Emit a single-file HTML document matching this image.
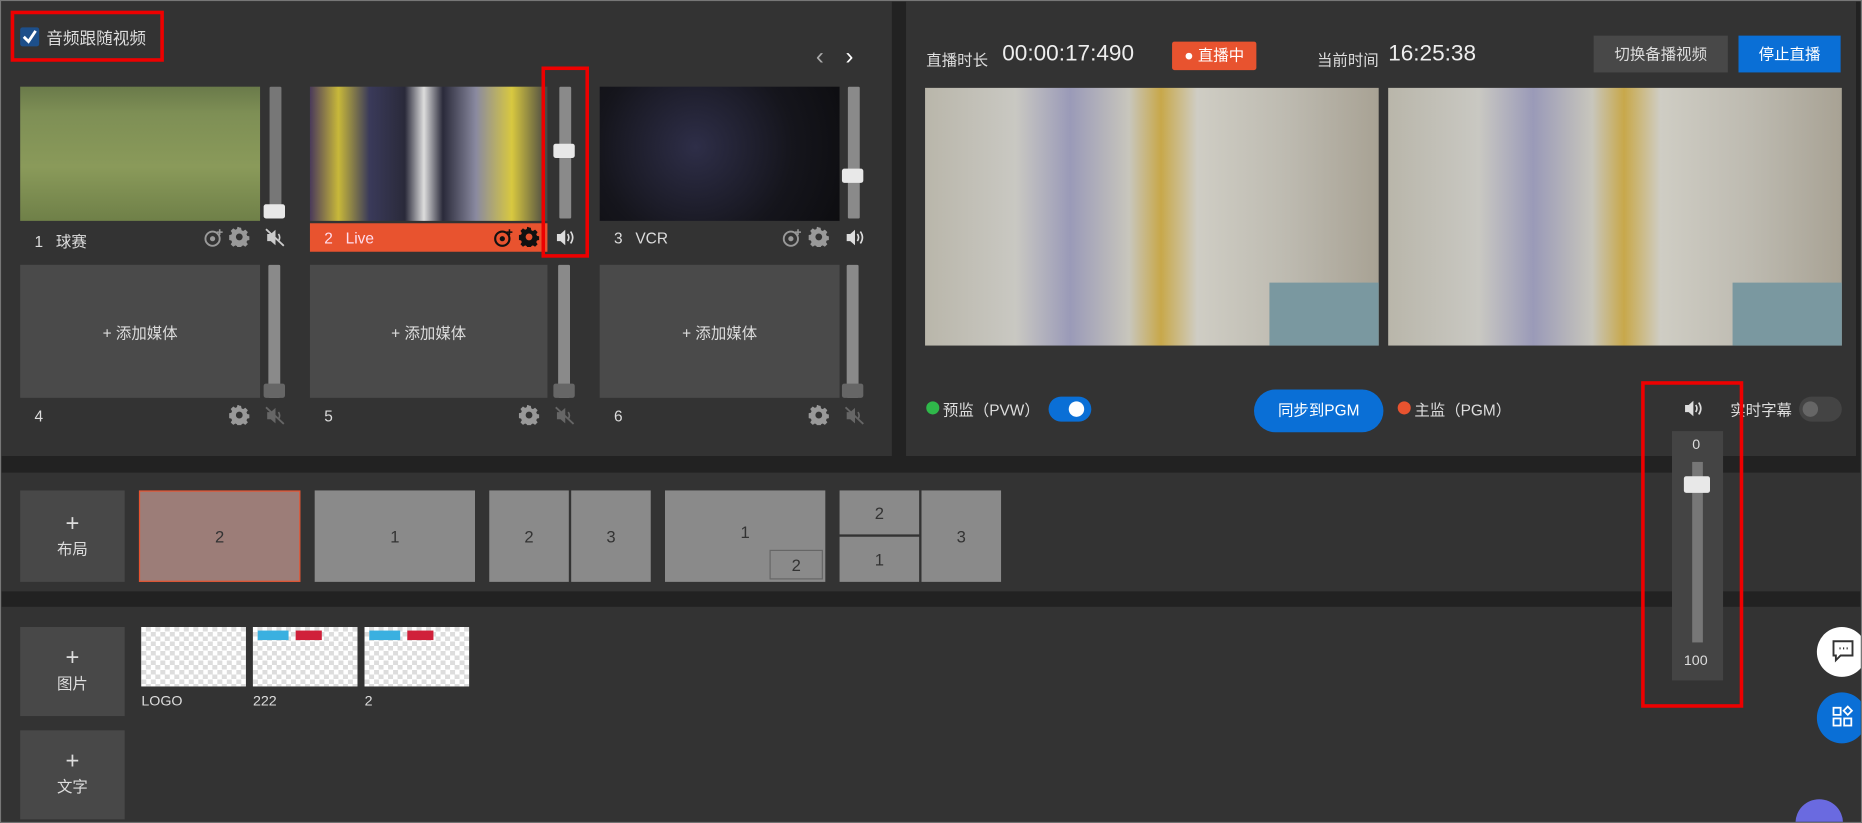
<!DOCTYPE html>
<html><head><meta charset="utf-8">
<style>
*{box-sizing:border-box;margin:0;padding:0}
html,body{width:1862px;height:823px;overflow:hidden;background:#2a2a2a}
#w{position:absolute;left:0;top:0;width:1568px;height:693px;overflow:hidden;transform:scale(1.1875);transform-origin:0 0;background:#222;font-family:"Liberation Sans","Noto Sans CJK SC",sans-serif;color:#ddd;border:1px solid #777}
.a{position:absolute}
.p{position:absolute;background:#333}
.tile{position:absolute;background:#4a4a4a;color:#ddd;font-size:13px;display:flex;align-items:center;justify-content:center}
.trk{position:absolute;width:10px;background:#8a8a8a;border-radius:1px}
.hd{position:absolute;width:18px;height:12px;background:#e8e8e8;border-radius:2px}
.hdd{position:absolute;width:18px;height:12px;background:#666;border-radius:2px}
.lbl{position:absolute;font-size:13px;color:#ddd}
.red{position:absolute;border:3px solid #e00;}
.lay{position:absolute;background:#8a8a8a;color:#333;font-size:14px;display:flex;align-items:center;justify-content:center}
.btn{position:absolute;background:#484848;color:#ddd;font-size:13px;text-align:center}
.chk{position:absolute;background-color:#fff;background-image:repeating-conic-gradient(#ddd 0 25%,#fff 0 50%);background-size:8px 8px}
svg{position:absolute}
</style></head><body><div id="w">
<div class="p" style="left:0;top:0;width:750px;height:383px"></div>
<div class="p" style="left:762px;top:0;width:800px;height:383px"></div>
<div class="p" style="left:0;top:397px;width:1568px;height:100px"></div>
<div class="p" style="left:0;top:510px;width:1568px;height:183px"></div>

<div class="a" style="left:16px;top:22px;width:16px;height:16px;background:#1d4f8a;border-radius:2px"></div>
<svg style="left:16px;top:22px" width="16" height="16"><path d="M3 8 L7 12 L13 3" stroke="#fff" stroke-width="2.4" fill="none"/></svg>
<div class="lbl" style="left:38px;top:21px;font-size:14px">音频跟随视频</div>
<div class="red" style="left:8px;top:8px;width:129px;height:43px"></div>
<div class="lbl" style="left:686px;top:36px;font-size:20px;color:#aaa">‹</div>
<div class="lbl" style="left:711px;top:36px;font-size:20px;color:#fff">›</div>

<div class="a" style="left:16px;top:72px;width:202px;height:113px;background:linear-gradient(180deg,#6a7a4a 0%,#7e8f55 20%,#8a9a5a 60%,#6f8048 100%)"></div>
<div class="a" style="left:260px;top:72px;width:200px;height:113px;background:linear-gradient(90deg,#4a3a5a 0%,#c8b83a 12%,#3a3a5a 25%,#2a2a3a 40%,#ddd 48%,#2a2a3a 56%,#8a8aa0 70%,#d8c840 85%,#444 100%)"></div>
<div class="a" style="left:504px;top:72px;width:202px;height:113px;background:radial-gradient(circle at 40% 45%,#2e2e48 0%,#15151c 60%,#0d0d10 100%)"></div>
<div class="trk" style="left:226px;top:72px;height:111px;background:#777"></div>
<div class="hd" style="left:221px;top:171px"></div>
<div class="trk" style="left:470px;top:72px;height:111px"></div>
<div class="hd" style="left:465px;top:120px"></div>
<div class="trk" style="left:713px;top:72px;height:111px"></div>
<div class="hd" style="left:708px;top:141px"></div>

<div class="a" style="left:260px;top:187px;width:200px;height:24px;background:#e8532f"></div>
<div class="lbl" style="left:28px;top:192px">1&nbsp;&nbsp;&nbsp;球赛</div>
<div class="lbl" style="left:272px;top:192px;color:#fde">2&nbsp;&nbsp;&nbsp;Live</div>
<div class="lbl" style="left:516px;top:192px">3&nbsp;&nbsp;&nbsp;VCR</div>

<svg style="left:170px;top:190px" width="18" height="18"><circle cx="8" cy="10" r="6" stroke="#999" stroke-width="1.6" fill="none"/><circle cx="8" cy="10" r="2.2" fill="#999"/><path d="M14 2v5M11.5 4.5h5" stroke="#999" stroke-width="1.3"/></svg>
<svg style="left:414px;top:190px" width="18" height="18"><circle cx="8" cy="10" r="6" stroke="#111" stroke-width="1.8" fill="none"/><circle cx="8" cy="10" r="2.2" fill="#111"/><path d="M14 2v5M11.5 4.5h5" stroke="#111" stroke-width="1.3"/></svg>
<svg style="left:657px;top:190px" width="18" height="18"><circle cx="8" cy="10" r="6" stroke="#999" stroke-width="1.6" fill="none"/><circle cx="8" cy="10" r="2.2" fill="#999"/><path d="M14 2v5M11.5 4.5h5" stroke="#999" stroke-width="1.3"/></svg>
<svg style="left:192px;top:190px" width="17" height="17" viewBox="0 0 16 16"><path d="M8 0.5l1.4 .2.4 2 1.3.6 1.7-1.1 2 2-1.1 1.7.6 1.3 2 .4v2.8l-2 .4-.6 1.3 1.1 1.7-2 2-1.7-1.1-1.3.6-.4 2H6.6l-.4-2-1.3-.6-1.7 1.1-2-2 1.1-1.7-.6-1.3-2-.4V6.6l2-.4.6-1.3L1.2 3.2l2-2 1.7 1.1 1.3-.6.4-2zM8 5.3a2.7 2.7 0 1 0 0 5.4 2.7 2.7 0 0 0 0-5.4z" fill="#999"/></svg>
<svg style="left:436px;top:190px" width="17" height="17" viewBox="0 0 16 16"><path d="M8 0.5l1.4 .2.4 2 1.3.6 1.7-1.1 2 2-1.1 1.7.6 1.3 2 .4v2.8l-2 .4-.6 1.3 1.1 1.7-2 2-1.7-1.1-1.3.6-.4 2H6.6l-.4-2-1.3-.6-1.7 1.1-2-2 1.1-1.7-.6-1.3-2-.4V6.6l2-.4.6-1.3L1.2 3.2l2-2 1.7 1.1 1.3-.6.4-2zM8 5.3a2.7 2.7 0 1 0 0 5.4 2.7 2.7 0 0 0 0-5.4z" fill="#111"/></svg>
<svg style="left:680px;top:190px" width="17" height="17" viewBox="0 0 16 16"><path d="M8 0.5l1.4 .2.4 2 1.3.6 1.7-1.1 2 2-1.1 1.7.6 1.3 2 .4v2.8l-2 .4-.6 1.3 1.1 1.7-2 2-1.7-1.1-1.3.6-.4 2H6.6l-.4-2-1.3-.6-1.7 1.1-2-2 1.1-1.7-.6-1.3-2-.4V6.6l2-.4.6-1.3L1.2 3.2l2-2 1.7 1.1 1.3-.6.4-2zM8 5.3a2.7 2.7 0 1 0 0 5.4 2.7 2.7 0 0 0 0-5.4z" fill="#999"/></svg>
<svg style="left:192px;top:340px" width="17" height="17" viewBox="0 0 16 16"><path d="M8 0.5l1.4 .2.4 2 1.3.6 1.7-1.1 2 2-1.1 1.7.6 1.3 2 .4v2.8l-2 .4-.6 1.3 1.1 1.7-2 2-1.7-1.1-1.3.6-.4 2H6.6l-.4-2-1.3-.6-1.7 1.1-2-2 1.1-1.7-.6-1.3-2-.4V6.6l2-.4.6-1.3L1.2 3.2l2-2 1.7 1.1 1.3-.6.4-2zM8 5.3a2.7 2.7 0 1 0 0 5.4 2.7 2.7 0 0 0 0-5.4z" fill="#999"/></svg>
<svg style="left:436px;top:340px" width="17" height="17" viewBox="0 0 16 16"><path d="M8 0.5l1.4 .2.4 2 1.3.6 1.7-1.1 2 2-1.1 1.7.6 1.3 2 .4v2.8l-2 .4-.6 1.3 1.1 1.7-2 2-1.7-1.1-1.3.6-.4 2H6.6l-.4-2-1.3-.6-1.7 1.1-2-2 1.1-1.7-.6-1.3-2-.4V6.6l2-.4.6-1.3L1.2 3.2l2-2 1.7 1.1 1.3-.6.4-2zM8 5.3a2.7 2.7 0 1 0 0 5.4 2.7 2.7 0 0 0 0-5.4z" fill="#999"/></svg>
<svg style="left:680px;top:340px" width="17" height="17" viewBox="0 0 16 16"><path d="M8 0.5l1.4 .2.4 2 1.3.6 1.7-1.1 2 2-1.1 1.7.6 1.3 2 .4v2.8l-2 .4-.6 1.3 1.1 1.7-2 2-1.7-1.1-1.3.6-.4 2H6.6l-.4-2-1.3-.6-1.7 1.1-2-2 1.1-1.7-.6-1.3-2-.4V6.6l2-.4.6-1.3L1.2 3.2l2-2 1.7 1.1 1.3-.6.4-2zM8 5.3a2.7 2.7 0 1 0 0 5.4 2.7 2.7 0 0 0 0-5.4z" fill="#999"/></svg>
<svg style="left:222px;top:191px" width="17" height="16"><path d="M2 5h3l4-3.5v13L5 11H2z" fill="#ccc"/><path d="M1 1l15 14" stroke="#ccc" stroke-width="1.5"/><path d="M11.5 5q2 3 0 6" stroke="#ccc" stroke-width="1.4" fill="none"/></svg>
<svg style="left:466px;top:191px" width="17" height="16"><path d="M2 5h3l4-3.5v13L5 11H2z" fill="#ddd"/><path d="M11 5q2 3 0 6M13.5 3q3.5 5 0 10" stroke="#ddd" stroke-width="1.4" fill="none"/></svg>
<svg style="left:710px;top:191px" width="17" height="16"><path d="M2 5h3l4-3.5v13L5 11H2z" fill="#ddd"/><path d="M11 5q2 3 0 6M13.5 3q3.5 5 0 10" stroke="#ddd" stroke-width="1.4" fill="none"/></svg>
<svg style="left:222px;top:341px" width="17" height="16"><path d="M2 5h3l4-3.5v13L5 11H2z" fill="#666"/><path d="M1 1l15 14" stroke="#666" stroke-width="1.5"/><path d="M11.5 5q2 3 0 6" stroke="#666" stroke-width="1.4" fill="none"/></svg>
<svg style="left:466px;top:341px" width="17" height="16"><path d="M2 5h3l4-3.5v13L5 11H2z" fill="#666"/><path d="M1 1l15 14" stroke="#666" stroke-width="1.5"/><path d="M11.5 5q2 3 0 6" stroke="#666" stroke-width="1.4" fill="none"/></svg>
<svg style="left:710px;top:341px" width="17" height="16"><path d="M2 5h3l4-3.5v13L5 11H2z" fill="#666"/><path d="M1 1l15 14" stroke="#666" stroke-width="1.5"/><path d="M11.5 5q2 3 0 6" stroke="#666" stroke-width="1.4" fill="none"/></svg>
<div class="red" style="left:455px;top:55px;width:40px;height:161px"></div>

<div class="tile" style="left:16px;top:222px;width:202px;height:112px">+ 添加媒体</div>
<div class="tile" style="left:260px;top:222px;width:200px;height:112px">+ 添加媒体</div>
<div class="tile" style="left:504px;top:222px;width:202px;height:112px">+ 添加媒体</div>
<div class="trk" style="left:225px;top:222px;height:112px"></div><div class="hdd" style="left:221px;top:322px"></div>
<div class="trk" style="left:469px;top:222px;height:112px"></div><div class="hdd" style="left:465px;top:322px"></div>
<div class="trk" style="left:712px;top:222px;height:112px"></div><div class="hdd" style="left:708px;top:322px"></div>
<div class="lbl" style="left:28px;top:342px">4</div>
<div class="lbl" style="left:272px;top:342px">5</div>
<div class="lbl" style="left:516px;top:342px">6</div>

<div class="lbl" style="left:779px;top:39px">直播时长</div>
<div class="lbl" style="left:843px;top:34px;font-size:19px;color:#eee">00:00:17:490</div>
<div class="a" style="left:986px;top:34px;width:71px;height:24px;background:#e8532f;border-radius:2px;color:#fff;font-size:13px;line-height:24px;text-align:center">● 直播中</div>
<div class="lbl" style="left:1108px;top:39px">当前时间</div>
<div class="lbl" style="left:1168px;top:34px;font-size:19px;color:#eee">16:25:38</div>
<div class="btn" style="left:1341px;top:29px;width:113px;height:31px;line-height:31px">切换备播视频</div>
<div class="btn" style="left:1463px;top:29px;width:86px;height:31px;line-height:31px;background:#0a6fd6;color:#fff">停止直播</div>

<div class="a" style="left:778px;top:73px;width:382px;height:217px;background:linear-gradient(90deg,#b9b6aa 0%,#c9c8c2 20%,#9a9ab8 32%,#c8c6bc 45%,#c8a84a 52%,#cfcdc4 60%,#bdbab0 80%,#a8a294 100%)"></div>
<div class="a" style="left:1068px;top:237px;width:92px;height:53px;background:#7a98a0"></div>
<div class="a" style="left:1168px;top:73px;width:382px;height:217px;background:linear-gradient(90deg,#b9b6aa 0%,#c9c8c2 20%,#9a9ab8 32%,#c8c6bc 45%,#c8a84a 52%,#cfcdc4 60%,#bdbab0 80%,#a8a294 100%)"></div>
<div class="a" style="left:1458px;top:237px;width:92px;height:53px;background:#7a98a0"></div>

<div class="a" style="left:779px;top:337px;width:11px;height:11px;border-radius:50%;background:#2fb84a"></div>
<div class="lbl" style="left:793px;top:334px">预监（PVW）</div>
<div class="a" style="left:882px;top:333px;width:36px;height:21px;border-radius:11px;background:#0a6fd6"></div>
<div class="a" style="left:899px;top:337px;width:13px;height:13px;border-radius:50%;background:#fff"></div>
<div class="a" style="left:1055px;top:327px;width:109px;height:36px;border-radius:18px;background:#0a6fd6;color:#fff;font-size:13px;line-height:36px;text-align:center">同步到PGM</div>
<div class="a" style="left:1176px;top:337px;width:11px;height:11px;border-radius:50%;background:#e8532f"></div>
<div class="lbl" style="left:1190px;top:334px">主监（PGM）</div>
<svg style="left:1416px;top:335px" width="18" height="16"><path d="M2 5h3l4-3.5v13L5 11H2z" fill="#ddd"/><path d="M11 5q2 3 0 6M13.5 3q3.5 5 0 10" stroke="#ddd" stroke-width="1.4" fill="none"/></svg>
<div class="lbl" style="left:1456px;top:334px">实时字幕</div>
<div class="a" style="left:1514px;top:333px;width:36px;height:21px;border-radius:11px;background:#444"></div>
<div class="a" style="left:1517px;top:337px;width:13px;height:13px;border-radius:50%;background:#666"></div>

<div class="btn" style="left:16px;top:412px;width:88px;height:77px;padding-top:18px;line-height:20px"><span style="font-size:20px">+</span><br>布局</div>
<div class="lay" style="left:116px;top:412px;width:136px;height:77px;background:#9c7d78;border:1px solid #e8532f">2</div>
<div class="lay" style="left:264px;top:412px;width:135px;height:77px">1</div>
<div class="lay" style="left:411px;top:412px;width:67px;height:77px">2</div>
<div class="lay" style="left:480px;top:412px;width:67px;height:77px">3</div>
<div class="lay" style="left:559px;top:412px;width:135px;height:77px;padding-bottom:8px">1</div>
<div class="lay" style="left:647px;top:462px;width:45px;height:25px;border:1px solid #666">2</div>
<div class="lay" style="left:706px;top:412px;width:67px;height:37px">2</div>
<div class="lay" style="left:706px;top:451px;width:67px;height:38px">1</div>
<div class="lay" style="left:775px;top:412px;width:67px;height:77px">3</div>

<div class="btn" style="left:16px;top:527px;width:88px;height:75px;padding-top:16px;line-height:20px"><span style="font-size:20px">+</span><br>图片</div>
<div class="chk" style="left:118px;top:527px;width:88px;height:50px"></div>
<div class="chk" style="left:212px;top:527px;width:88px;height:50px"></div>
<div class="a" style="left:216px;top:530px;width:26px;height:8px;background:#3ab0e0"></div><div class="a" style="left:248px;top:530px;width:22px;height:8px;background:#d0203a"></div>
<div class="chk" style="left:306px;top:527px;width:88px;height:50px"></div>
<div class="a" style="left:310px;top:530px;width:26px;height:8px;background:#3ab0e0"></div><div class="a" style="left:342px;top:530px;width:22px;height:8px;background:#d0203a"></div>
<div class="lbl" style="left:118px;top:582px;font-size:12px">LOGO</div>
<div class="lbl" style="left:212px;top:582px;font-size:12px">222</div>
<div class="lbl" style="left:306px;top:582px;font-size:12px">2</div>
<div class="btn" style="left:16px;top:614px;width:88px;height:75px;padding-top:16px;line-height:20px"><span style="font-size:20px">+</span><br>文字</div>

<div class="a" style="left:1407px;top:362px;width:43px;height:210px;background:#444"></div>
<div class="lbl" style="left:1424px;top:366px;font-size:12px">0</div>
<div class="a" style="left:1424px;top:388px;width:9px;height:152px;background:#777"></div>
<div class="hd" style="left:1417px;top:400px;width:22px;height:14px"></div>
<div class="lbl" style="left:1417px;top:548px;font-size:12px">100</div>
<div class="red" style="left:1381px;top:320px;width:86px;height:275px"></div>

<div class="a" style="left:1529px;top:527px;width:42px;height:42px;border-radius:50%;background:#fff"></div>
<svg style="left:1541px;top:537px" width="20" height="20"><path d="M2 2h16v12H8l-4 4v-4H2z" stroke="#333" stroke-width="1.6" fill="none"/><path d="M7 8h1M10 8h1M13 8h1" stroke="#333" stroke-width="1.6"/></svg>
<div class="a" style="left:1529px;top:582px;width:42px;height:43px;border-radius:50%;background:#0a6fd6"></div>
<svg style="left:1541px;top:593px" width="20" height="20"><rect x="2" y="2" width="6" height="6" stroke="#fff" stroke-width="1.5" fill="none"/><rect x="2" y="11" width="6" height="6" stroke="#fff" stroke-width="1.5" fill="none"/><rect x="11" y="11" width="6" height="6" stroke="#fff" stroke-width="1.5" fill="none"/><path d="M14 1l3.5 3.5L14 8l-3.5-3.5z" stroke="#fff" stroke-width="1.5" fill="none"/></svg>
<div class="a" style="left:1511px;top:672px;width:40px;height:40px;border-radius:50%;background:#6a6ae0"></div>
</div></body></html>
